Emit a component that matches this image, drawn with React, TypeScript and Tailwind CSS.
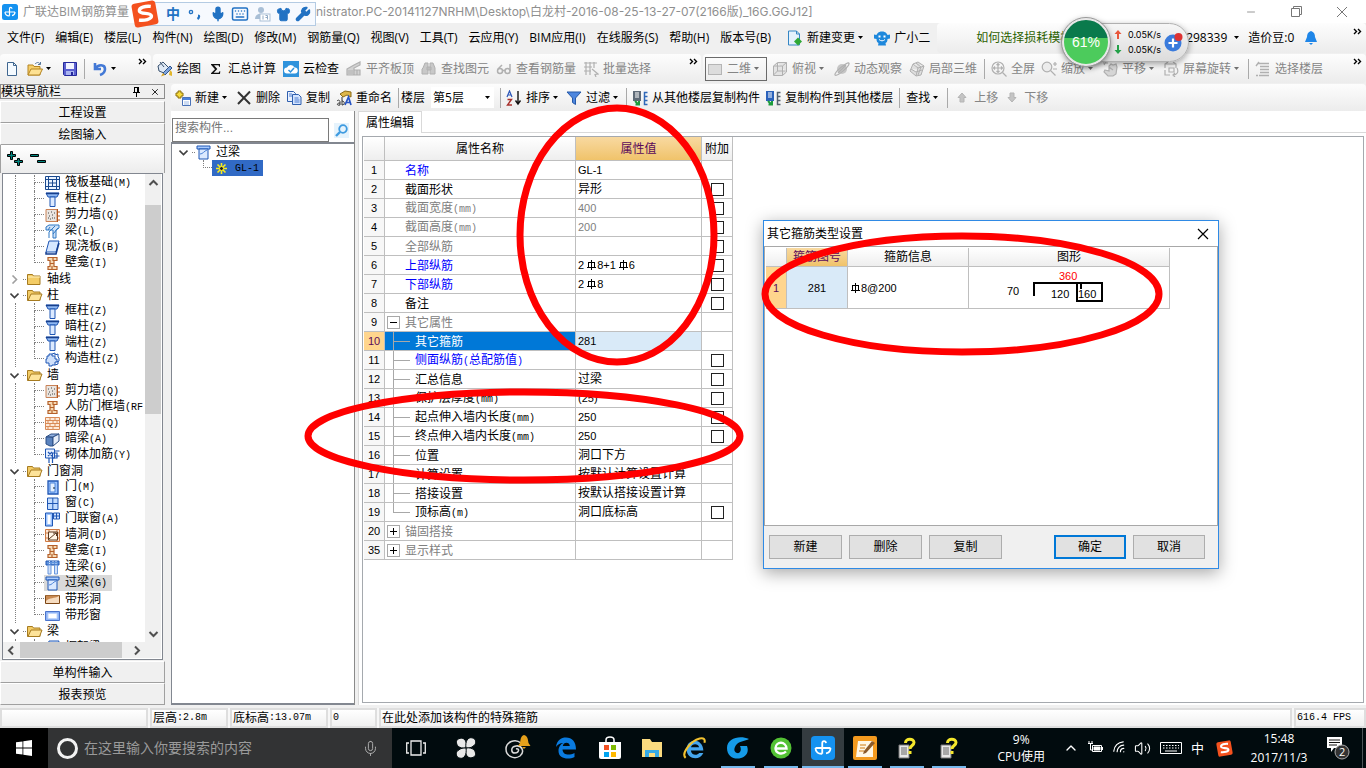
import React from 'react';
import { Mic, Keyboard, Shirt, Wrench, Wifi, Volume2, ChevronUp, Minus, X } from 'lucide-react';

const UI = "font-['Open_Sans','Noto_Sans_CJK_SC',sans-serif]";
const SONG = "font-['Liberation_Sans','Noto_Sans_CJK_SC',sans-serif]";

/* Latin runs are set at half the width of the Chinese characters. */
function T({ s, num }: { s: string; num?: boolean }) {
  return (
    <>
      {s.split(/([\x20-\x7e]+)/).map((p, i) =>
        i % 2 ? (
          <span key={i} className={num ? "font-['Liberation_Sans'] text-[11px]" : "font-['Liberation_Mono'] text-[10px]"}>{p}</span>
        ) : (
          p
        ),
      )}
    </>
  );
}

function Rebar() {
  return (
    <svg width="13" height="12" viewBox="0 0 13 12" className="inline-block align-[-2px]" fill="none" stroke="#000" shapeRendering="crispEdges">
      <path d="M4.500 3v5M7.500 1v10M10.500 3v5M4 3.500h7M3 8.500h9" />
    </svg>
  );
}

function Caret({ gray }: { gray?: boolean }) {
  return (
    <svg width="11" height="6" viewBox="0 0 11 6" className="shrink-0">
      <path d="M3 1h5L5.500 4z" fill={gray ? '#6f6f6f' : '#000'} />
    </svg>
  );
}

/* ---------- toolbar icons ---------- */
const g = { fill: 'none', stroke: '#b0b0b0', strokeWidth: 1.2 };
const ICONS: Record<string, React.ReactNode> = {
  new: <path d="M3.500 1.500h6l3 3v10h-9zM9.500 1.500v3h3" fill="#f4faff" stroke="#3f6690" />,
  open: (
    <>
      <path d="M1 4h5l1 1.500h6V14H1z" fill="#f6cf6a" stroke="#b58522" />
      <path d="M4 8h11.500l-3 6H1z" fill="#fde193" stroke="#b58522" />
      <path d="M8 3c2-2 4-2 5 0M13.500 1v2.500H11" fill="none" stroke="#55779c" />
    </>
  ),
  save: (
    <>
      <path d="M1.500 1.500h13v13h-12l-1-1z" fill="#5a5fd0" stroke="#23289b" />
      <path d="M4 2h8v6H4z" fill="#f1f3ff" />
      <path d="M4 10h8v4H4z" fill="#a9b4f0" />
      <path d="M9 11h2v3H9z" fill="#23289b" />
    </>
  ),
  undo: <path d="M3 2v6h6M3.500 7.500C6 3 13 3 13 8c0 3-2 5-5 6" fill="none" stroke="#4379d6" strokeWidth="2.600" />,
  bucket: (
    <>
      <path d="M1 5l5-4 6 6-5 5-5-2z" fill="#dfe9f5" stroke="#38506e" />
      <path d="M3 1l4 5" stroke="#38506e" />
      <path d="M6 12l7-7 2 2-7 7z" fill="#7fa5dd" stroke="#30558e" />
      <path d="M6 12l2 2-4 1.500z" fill="#d9a520" />
      <path d="M13 9l2 2v4l-3-1z" fill="#e2b62c" />
    </>
  ),
  sigma: <path d="M3 3h9v2.800h-.8L10.500 4.300H6L9.300 8 5.700 11.800h5l.8-1.500h.8L12 13H3v-.8L7 8.200 3 3.800z" fill="#111" />,
  cloud: (
    <>
      <rect width="16" height="16" fill="#2f93dc" />
      <path d="M4 12.500a3 3 0 010-6 4 4 0 017.500 0 3 3 0 01.5 6z" fill="#fff" />
      <path d="M5.500 9l2 2 3.500-4" fill="none" stroke="#2f93dc" strokeWidth="1.500" />
    </>
  ),
  slabTop: <path d="M1 8l7-4 6-3v3L8 7v7H1zM8 9h6v5H8zM2 10h5M2 12h5M11 9v5" {...g} fill="#d2d2d2" />,
  binoc: <path d="M2 7l2-5h3v11H1V8zM9 2h3l2 5v6H9zM6 6h4v3H6z" fill="#c8c8c8" stroke="#b0b0b0" />,
  glasses: (
    <g {...g} strokeWidth="1.500">
      <circle cx="4" cy="10" r="2.500" />
      <circle cx="11.500" cy="10" r="2.500" />
      <path d="M6.500 9.500h2.500M2 8l4-4M14 10V3" />
    </g>
  ),
  batch: <path d="M1 2h13M1 6h8M1 10h7M3 1v13M7 1v13M11 1v6M9 8l6 5-3 .5 1 2.500" {...g} />,
  rect: <rect x="1.500" y="3.500" width="13" height="10" fill="#dcdcdc" stroke="#b5b5b5" />,
  cube: <path d="M1.500 5l4-3.500h9V11l-4 3.500h-9zM1.500 5h9v9.500M10.500 5l4-3.500M5.500 2v8h8M5.500 10l-4 4" {...g} strokeWidth="1" fill="#e3e3e3" />,
  orbit: (
    <>
      <circle cx="8" cy="8" r="5" fill="#c6c6c6" />
      <path d="M1 14c2 2 15-9 14-12M1 14c-1-3 12-13 14-12M4 12l8-8" {...g} />
    </>
  ),
  local3d: <path d="M4 3l5-2 6 4-3 9-5 1-6-5zM4 3l5 4 6-2M9 7l-2 8M2 8l5 3 6-2M7 2l5 4-3 8" {...g} strokeWidth="1" fill="#dedede" />,
  full: (
    <g {...g}>
      <circle cx="7" cy="7" r="6" />
      <path d="M7 2.500v9M2.500 7h9M5.500 4L7 2.500 8.500 4M5.500 10L7 11.500 8.500 10M4 5.500L2.500 7 4 8.500M10 5.500L11.500 7 10 8.500M11.500 11.500l4 4" />
    </g>
  ),
  zoom: (
    <g {...g}>
      <circle cx="6" cy="6" r="4.800" fill="#ececec" />
      <path d="M9.500 9.500l5 5M12 3h4M14 1v4M12 8h4" />
    </g>
  ),
  hand: <path d="M3 9l4 1V5l2-2 2 1 3-1 1 3-1 7-3 2H6l-4-4zM7 6l4 3M1 2h5M2 4l2-3" {...g} fill="#d5d5d5" />,
  rotate: <path d="M2 7V3h11v4M2 3l3-2M13 3l-3-2M2 9v5h5M14 7c2 4 0 7-4 7M12 12l-2 2 2 2M6 7h5v4H6z" {...g} />,
  floors: <path d="M3 2.500h11M5 5.500h9M5 8.500h9M5 11.500h9M4 14.500h10M1 5l3-4M1 14.500h2" {...g} strokeWidth="1.400" />,
  add: (
    <>
      <path d="M3 1h3v2h2v3H6v2H3V6H1V3h2z" fill="#f7dc3c" stroke="#8b6f0a" />
      <path d="M7.500 7.500h8v8h-8z" fill="#fff" stroke="#4a72b8" />
      <path d="M8 8h7v2H8z" fill="#4a82dc" />
      <path d="M9 12h5M9 14h5" stroke="#9cb9e6" />
    </>
  ),
  del: <path d="M2 2l12 12M14 1.500L2 14" stroke="#333" strokeWidth="2" />,
  copy: (
    <>
      <path d="M1.500 1.500h6l2 2v8h-8z" fill="#e9f1ff" stroke="#2f5fae" />
      <path d="M6.500 4.500h6l2.500 2.500v7.500H6.500z" fill="#d4e4ff" stroke="#2f5fae" />
      <path d="M3 4h3M3 6h3M8.500 8h4M8.500 10h5M8.500 12h5" stroke="#4d7dcf" />
    </>
  ),
  rename: (
    <>
      <path d="M4 4l5-3 6 1v5l-4-2-4 2z" fill="#ddb64a" stroke="#8a6a17" />
      <path d="M9 15l3.500-8 2.500 8M10 12.500h4" fill="none" stroke="#2855c4" strokeWidth="1.700" />
      <path d="M1 11c2-2 3 0 3 1v3c-3 1-4-2 0-2M6 7v8c3 0 3-4 0-4" fill="none" stroke="#333" />
    </>
  ),
  sort: (
    <>
      <path d="M1 7l2.500-6L6 7M2 5h3" fill="none" stroke="#2c57b8" strokeWidth="1.200" />
      <path d="M1.500 9.500h4L1.500 15h4.500" fill="none" stroke="#a8302c" strokeWidth="1.400" />
      <path d="M12 1v12M9.500 10.500L12 14l2.500-3.500" fill="none" stroke="#111" strokeWidth="1.400" />
    </>
  ),
  filter: <path d="M1 2h14l-5.500 6v6.500l-3-2V8z" fill="#4d86de" stroke="#2458a8" />,
  copyIn: (
    <>
      <path d="M1 1h8v10H1z" fill="#5e6a77" />
      <path d="M3 3h4M3 5h4M3 7h4" stroke="#fff" />
      <path d="M15.500 2.500h-3v12h3M12.500 6.500h3M12.500 10.500h3" fill="none" stroke="#2f68b8" strokeWidth="1.500" />
      <path d="M3 11l3 3M7 11v3.500H3.500" stroke="#1c9c3c" strokeWidth="2" fill="none" />
    </>
  ),
  copyOut: (
    <>
      <path d="M1 1h8v10H1z" fill="#2b62bb" />
      <path d="M3 3h4M3 5h4M3 7h4" stroke="#fff" />
      <path d="M15.500 2.500h-3v12h3M12.500 6.500h3M12.500 10.500h3" fill="none" stroke="#54616f" strokeWidth="1.500" />
      <path d="M3 11l3 3M7 11v3.500H3.500" stroke="#1c9c3c" strokeWidth="2" fill="none" />
    </>
  ),
  up: <path d="M8 3l4 4.500h-2V12H6V7.500H4z" fill="#c4c4c4" stroke="#b5b5b5" />,
  down: <path d="M8 12l4-4.500h-2V3H6v4.500H4z" fill="#c4c4c4" stroke="#b5b5b5" />,
  change: (
    <>
      <path d="M1.500 1h8l3 3v11h-11zM9.500 1v3h3" fill="#e4f1fc" stroke="#3486c4" />
      <path d="M11 7.500l4 4-4 4-4-4z" fill="#2ea836" />
    </>
  ),
  robot: (
    <>
      <path d="M8 1.500c4 0 5 2.500 5.500 3.500L16 4.500v4l-2.500.5c0 3-1 3.500-2 4l.5 2.500H4L4.500 13c-1-.5-2-1-2-4L0 8.500v-4l2.500.5C3 4 4 1.500 8 1.500z" fill="#1e88dc" />
      <path d="M4.500 5.500h2v2h-2zM9.500 5.500h2v2h-2z" fill="#fff" />
      <path d="M5 9.500c2 1.800 4 1.800 6 0" stroke="#fff" fill="none" />
    </>
  ),
};

function Icon({ n, size = 16 }: { n: string; size?: number }) {
  return (
    <svg width={size} height={size} viewBox="0 0 16 16" className="shrink-0">
      {ICONS[n]}
    </svg>
  );
}

function Tool({ icon, label, caret, off }: { icon?: string; label?: string; caret?: boolean; off?: boolean }) {
  return (
    <button type="button" aria-label={label ?? icon} className={`flex shrink-0 items-center whitespace-nowrap ${off ? 'text-[#858585]' : 'text-black'}`}>
      {icon && <Icon n={icon} />}
      {label && <span className={icon ? 'ml-1' : ''}>{label}</span>}
      {caret && <Caret gray={off} />}
    </button>
  );
}

const Sep = () => <span className="h-5 w-px shrink-0 bg-[#a9a9a9]" />;

function More() {
  return (
    <svg width="9" height="7" viewBox="0 0 9 7" className="ml-auto shrink-0 self-start" fill="none" stroke="#000" strokeWidth="1.400">
      <path d="M1 1l2.500 2.500L1 6M5 1l2.500 2.500L5 6" />
    </svg>
  );
}

/* ---------- tree icons ---------- */
const b = '#1f56b4';
const o = '#b5602a';
const TREE: Record<string, React.ReactNode> = {
  raft: (
    <>
      <path d="M.5.500h14v13H.500z" fill="#eaf3ff" stroke="#19498f" />
      <path d="M3.500.500v13M11.500.500v13M.500 3.500h14M.500 10.500h14M7.500 3v8M4 7h8" fill="none" stroke="#19498f" />
    </>
  ),
  col: (
    <>
      <path d="M1 1h13l-2 4H3z" fill="#8fb8f2" stroke={b} />
      <path d="M5 5h5v9.500H5z" fill="#dceaff" stroke={b} />
      <path d="M1 1.500h13" stroke="#173f8c" strokeWidth="1.500" />
    </>
  ),
  shear: (
    <>
      <path d="M1 1.500h11v12H1z" fill="#e9e4df" stroke="#c98257" />
      <path d="M3 5h1M6 4h1M4 8h1M7 7h1M9 10h1M5 11h1M9 5h1M3 10h1M7 10h1" stroke="#444" />
      <path d="M12.500 1v13M13 4h2M13 8h2M13 12h2" stroke="#b5561c" />
    </>
  ),
  beam: (
    <>
      <path d="M1 3l3-2h10v3l-3 2v8H8V6H1z" fill="#cfe2f8" stroke="#2f78c4" />
      <path d="M4 14V8l6-6M5 3l-2 3M13 4l-5 6" stroke="#2f78c4" fill="none" />
    </>
  ),
  slab: (
    <>
      <path d="M4 1h10l-3 11H1z" fill="#d6e7ff" stroke={b} />
      <path d="M1 12v2h10l3-11" fill="none" stroke="#163f91" strokeWidth="1.500" />
    </>
  ),
  niche: <path d="M3 1.500h9v3H9v6h3v3H3v-3h2v-6H3zM8 2v3M5 7.500h4M7 10v3" fill="#f5d9b4" stroke={o} strokeWidth="1.200" />,
  gzz: (
    <>
      <path d="M4 2h3v2h3v3h2v3h-2v3H7v1H4v-3H1V7h1V4h2z" fill="#cfe0fa" stroke={b} />
      <path d="M7 2l3-1v2l3-1v3l1 1v3l-2 1M10 13l3-1V9" fill="none" stroke={b} />
    </>
  ),
  door: (
    <>
      <path d="M3 1h10v13H3z" fill="#9cc4ff" stroke={b} strokeWidth="1.300" />
      <path d="M5 3h5v9H5z" fill="#e3efff" stroke="#4d84d8" />
      <path d="M9 7v2" stroke="#123" />
    </>
  ),
  window: (
    <>
      <path d="M2.500 2h10.500v11.500H2.500z" fill="#c2dcff" stroke={b} />
      <path d="M7.800 2v11.500M2.500 7.500H13" fill="none" stroke={b} />
    </>
  ),
  doorwin: (
    <>
      <path d="M.5 1h7v13h-7z" fill="#9cc4ff" stroke={b} />
      <path d="M2.500 3h3v9h-3z" fill="#fff" />
      <path d="M8.500 1h6v6h-6zM11.500 1v6M8.500 4h6" fill="#cfe2ff" stroke={b} />
    </>
  ),
  brick: <path d="M.5 1.500h14v12H.500zM.500 4.500h14M.500 7.500h14M.500 10.500h14M5 2v3M10 2v3M3 5v3M8 5v3M12 5v3M5 8v3M10 8v3M3 11v3M8 11v3" fill="#fde9d8" stroke="#d98b58" />,
  abeam: (
    <>
      <path d="M1 5l5-3h8L8 5z" fill="#93b3e2" stroke="#2d4f85" />
      <path d="M1 5h3l4 .500V14H5l-4-2z" fill="#5a83bf" stroke="#2d4f85" />
      <path d="M8 5l6-3v7l-6 5z" fill="#e6eefa" stroke="#2d4f85" />
    </>
  ),
  jj: (
    <>
      <path d="M.5 1h9v9h-9z" fill="#e7f0ff" stroke={b} />
      <path d="M3 4l4 4M7 4L3 8M9.500 3h5M9.500 8h5M4 10v5M7.500 5v10M7 5h5v5H7" fill="none" stroke={b} strokeWidth="1.200" />
    </>
  ),
  hole: (
    <>
      <path d="M.5 1.500h14v12H.500zM.500 5h14M.500 10h14M4 2v12M12 2v12" fill="#fde8d6" stroke="#cf7a43" />
      <path d="M3.500 4h9v8h-9z" fill="#fff5e6" stroke="#5c3a20" />
      <path d="M4 11l7-6M8 5h3.500v3" fill="none" stroke="#5c3a20" />
    </>
  ),
  lian: (
    <>
      <path d="M1 1h13v4H1z" fill="#5f93dd" stroke={b} />
      <path d="M4.500 1v4M8 1v4M11 1v4" stroke="#dbe8fb" strokeDasharray="1 1" />
      <path d="M3 5h3v9H3zM9.500 5h3v9h-3z" fill="#cfe0fa" stroke="#6a97dc" />
    </>
  ),
  guo: (
    <>
      <path d="M1 1h13v3H1z" fill="#a8cbff" stroke={b} />
      <path d="M3 4h9v10H3z" fill="#dbe9ff" stroke={b} />
      <path d="M4 9c3 0 4-3 7-4" stroke="#4d84d8" fill="none" />
    </>
  ),
  stripHole: (
    <>
      <path d="M.5 3.500h14v8H.500z" fill="#f6dcc0" stroke="#7d4614" />
      <path d="M1 9C5 5 9 7 14 4v-.500H1z" fill="#c88a52" />
    </>
  ),
  stripWin: (
    <>
      <path d="M.5 3.500h14v9H.500z" fill="#8fb4f5" stroke="#4b74cc" />
      <path d="M3 5.500h9v5H3z" fill="#fff" stroke="#c2d6fb" />
    </>
  ),
};

function FolderIcon({ open }: { open: boolean }) {
  return (
    <svg width="17" height="14" viewBox="0 0 17 14" className="shrink-0" stroke="#a67b20">
      <path d="M1.500 2.500h5l1 1.500h6.500v8.500H1.500z" fill="#f3cc66" />
      {open ? <path d="M5 6h11l-2.500 6.500H2z" fill="#fde39a" /> : <path d="M2 5h12" stroke="#fff0be" />}
    </svg>
  );
}

function Chevron({ open }: { open: boolean }) {
  return (
    <svg width="9" height="9" viewBox="0 0 9 9" fill="none" stroke={open ? '#404040' : '#a0a0a0'} strokeWidth="1.600" className="shrink-0">
      {open ? <path d="M.5 2.500L4.500 6.500 8.500 2.500" /> : <path d="M2.500.5L6.500 4.500 2.500 8.500" />}
    </svg>
  );
}

type Group = { name?: string; open?: boolean; items: [string, string][] };
const GROUPS: Group[] = [
  { items: [['raft', '筏板基础(M)'], ['col', '框柱(Z)'], ['shear', '剪力墙(Q)'], ['beam', '梁(L)'], ['slab', '现浇板(B)'], ['niche', '壁龛(I)']] },
  { name: '轴线', open: false, items: [] },
  { name: '柱', open: true, items: [['col', '框柱(Z)'], ['col', '暗柱(Z)'], ['col', '端柱(Z)'], ['gzz', '构造柱(Z)']] },
  { name: '墙', open: true, items: [['shear', '剪力墙(Q)'], ['niche', '人防门框墙(RF'], ['brick', '砌体墙(Q)'], ['abeam', '暗梁(A)'], ['jj', '砌体加筋(Y)']] },
  {
    name: '门窗洞',
    open: true,
    items: [['door', '门(M)'], ['window', '窗(C)'], ['doorwin', '门联窗(A)'], ['hole', '墙洞(D)'], ['niche', '壁龛(I)'], ['lian', '连梁(G)'], ['guo', '过梁(G)'], ['stripHole', '带形洞'], ['stripWin', '带形窗']],
  },
  { name: '梁', open: true, items: [['slab', '框架梁']] },
];

function NavTree() {
  return (
    <ul className="min-w-0 flex-1 overflow-hidden pt-px">
      {GROUPS.map((gr, gi) => (
        <li key={gi}>
          {gr.name && (
            <div className="flex h-4 items-center pl-[7px]">
              <Chevron open={!!gr.open} />
              <span className="ml-1 w-[3px] border-t border-dotted border-[#808080]" />
              <FolderIcon open={!!gr.open} />
              <span className="ml-1">{gr.name}</span>
            </div>
          )}
          <ul className="ml-[12px] border-l border-dotted border-[#808080] pl-[18px]">
            {gr.items.map(([ic, label], i) => (
              <li key={i} className="flex h-4 items-center">
                <span className="flex h-4 shrink-0 flex-col">
                  <span className="h-2 w-[10px] border-b border-l border-dotted border-[#808080]" />
                  {i < gr.items.length - 1 && <span className="h-2 w-[10px] border-l border-dotted border-[#808080]" />}
                </span>
                <span className={`flex h-4 items-center pr-[5px] pl-px whitespace-nowrap ${label === '过梁(G)' ? 'bg-[#d9d9d9]' : ''}`}>
                  <svg width="15" height="15" viewBox="0 0 15 15" className="shrink-0">
                    {TREE[ic]}
                  </svg>
                  <span className="ml-[5px]">
                    <T s={label} />
                  </span>
                </span>
              </li>
            ))}
          </ul>
        </li>
      ))}
    </ul>
  );
}

const ScrollArrow = ({ d }: { d: string }) => (
  <svg width="17" height="17" viewBox="0 0 17 17" fill="none" stroke="#505050" strokeWidth="2" className="shrink-0">
    <path d={d} />
  </svg>
);

function NavButton({ children }: { children: string }) {
  return (
    <button type="button" className="flex h-[22px] w-full shrink-0 items-center justify-center border border-t-white border-r-[#a0a0a0] border-b-[#a0a0a0] border-l-white bg-[#f0f0f0] pt-[2px]">
      {children}
    </button>
  );
}

function Navigator() {
  return (
    <aside className="flex w-[165px] shrink-0 flex-col bg-[#f0f0f0]">
      <div className="flex h-[15px] shrink-0 items-center border border-[#8c8c8c] leading-none">
        <h2>模块导航栏</h2>
        <button type="button" aria-label="固定" className="ml-auto">
          <svg width="9" height="11" viewBox="0 0 9 11" fill="none" stroke="#000" shapeRendering="crispEdges">
            <path d="M2.500 6V1.500h4V6M5.500 1v5M1 6.500h7M4.500 7v4" />
          </svg>
        </button>
        <button type="button" aria-label="关闭" className="mx-1 ml-[9px]">
          <X size={10} strokeWidth={2} />
        </button>
      </div>
      <div className="h-[2px] shrink-0" />
      <NavButton>工程设置</NavButton>
      <NavButton>绘图输入</NavButton>
      <div className="flex h-7 shrink-0 items-center gap-[7px] border-x border-[#a0a0a0] bg-gradient-to-b from-white to-[#ececec] pl-[6px]">
        <button type="button" aria-label="全部展开">
          <svg width="16" height="16" viewBox="0 0 16 16" stroke="#000" fill="#00867f">
            <path d="M3.500.5h2v3h3v2h-3v3h-2v-3h-3v-2h3zM10.500 7.500h2v2h3v2h-3v3h-2v-3h-3v-2h3z" />
          </svg>
        </button>
        <button type="button" aria-label="全部折叠">
          <svg width="16" height="16" viewBox="0 0 16 16" stroke="#000" fill="#00867f">
            <path d="M.5 3.500h8v2h-8zM7.500 9.500h8v2h-8z" />
          </svg>
        </button>
      </div>
      <div className="mx-[2px] flex min-h-0 flex-1 flex-col overflow-hidden border border-[#828790] bg-white pr-px pb-px">
        <div className="flex min-h-0 flex-1">
          <NavTree />
          <div className="flex w-[16px] shrink-0 flex-col bg-[#f0f0f0]">
            <ScrollArrow d="M4.500 11l4-4 4 4" />
            <div className="mt-[14px] h-[209px] bg-[#cdcdcd]" />
            <div className="mt-auto">
              <ScrollArrow d="M4.500 7l4 4 4-4" />
            </div>
          </div>
        </div>
        <div className="flex h-[16px] shrink-0 items-center bg-[#f0f0f0] pr-4">
          <ScrollArrow d="M10 4.500l-4 4 4 4" />
          <div className="h-full w-[102px] bg-[#cdcdcd]" />
          <div className="ml-auto">
            <ScrollArrow d="M7 4.500l4 4-4 4" />
          </div>
        </div>
      </div>
      <div className="h-px shrink-0" />
      <NavButton>单构件输入</NavButton>
      <NavButton>报表预览</NavButton>
    </aside>
  );
}

function ComponentPanel() {
  return (
    <section className="flex w-[184px] shrink-0 flex-col border-r border-[#8a8a8a] bg-white">
      <div className="flex h-[31px] shrink-0 items-end">
        <input aria-label="搜索构件" placeholder="搜索构件..." className="ml-px h-6 w-[157px] border border-[#7a7a7a] bg-white px-[2px] pb-1 placeholder:text-[#757575]" />
        <button type="button" aria-label="搜索" className="mb-1 ml-[5px] flex h-[15px] w-[15px] items-center justify-center bg-[#e6f3fc]">
          <svg width="13" height="13" viewBox="0 0 13 13" fill="none" stroke="#3f9be0" strokeWidth="1.800">
            <circle cx="8" cy="5" r="3.800" />
            <path d="M5 8l-4 4" strokeWidth="2.400" />
          </svg>
        </button>
      </div>
      <ul className="flex-1 border-t-2 border-b-2 border-l border-[#828790] pl-[7px]">
        <li>
          <div className="flex h-4 items-center">
            <Chevron open />
            <span className="ml-1 w-[3px] border-t border-dotted border-[#808080]" />
            <svg width="15" height="15" viewBox="0 0 15 15" className="ml-px">
              {TREE.guo}
            </svg>
            <span className="ml-[5px]">过梁</span>
          </div>
          <div className="flex h-4 items-start pl-6">
            <span className="h-2 w-[9px] border-b border-l border-dotted border-[#808080]" />
            <span className="flex h-4 w-[51px] items-center bg-[#316ac5] pl-1">
              <svg width="11" height="11" viewBox="0 0 11 11" stroke="#f8ec20" strokeWidth="1.600">
                <path d="M5.500 0v11M0 5.500h11M1.500 1.500l8 8M9.500 1.500l-8 8" />
                <circle cx="5.500" cy="5.500" r="2" fill="#222" stroke="#f8ec20" strokeWidth="1" />
              </svg>
              <span className="ml-2">
                <T s="GL-1" />
              </span>
            </span>
          </div>
        </li>
      </ul>
    </section>
  );
}

/* ---------- property table ---------- */
type Row = { n: number; name: string; v?: string; c?: string; box?: boolean; kind?: 'sub' | 'last' | 'plus' | 'minus'; vc?: string };
const ROWS: Row[] = [
  { n: 1, name: '名称', v: 'GL-1', c: 'text-[#0000ff]' },
  { n: 2, name: '截面形状', v: '异形', box: true },
  { n: 3, name: '截面宽度(mm)', v: '400', c: 'text-[#808080]', vc: 'text-[#808080]', box: true },
  { n: 4, name: '截面高度(mm)', v: '200', c: 'text-[#808080]', vc: 'text-[#808080]', box: true },
  { n: 5, name: '全部纵筋', c: 'text-[#808080]', box: true },
  { n: 6, name: '上部纵筋', v: '2#8+1#6', c: 'text-[#0000ff]', box: true },
  { n: 7, name: '下部纵筋', v: '2#8', c: 'text-[#0000ff]', box: true },
  { n: 8, name: '备注', box: true },
  { n: 9, name: '其它属性', c: 'text-[#808080]', kind: 'minus' },
  { n: 10, name: '其它箍筋', v: '281', c: 'text-white', kind: 'sub' },
  { n: 11, name: '侧面纵筋(总配筋值)', c: 'text-[#0000ff]', kind: 'sub', box: true },
  { n: 12, name: '汇总信息', v: '过梁', kind: 'sub', box: true },
  { n: 13, name: '保护层厚度(mm)', v: '(25)', kind: 'sub', box: true },
  { n: 14, name: '起点伸入墙内长度(mm)', v: '250', kind: 'sub', box: true },
  { n: 15, name: '终点伸入墙内长度(mm)', v: '250', kind: 'sub', box: true },
  { n: 16, name: '位置', v: '洞口下方', kind: 'sub' },
  { n: 17, name: '计算设置', v: '按默认计算设置计算', kind: 'sub' },
  { n: 18, name: '搭接设置', v: '按默认搭接设置计算', kind: 'sub' },
  { n: 19, name: '顶标高(m)', v: '洞口底标高', kind: 'last', box: true },
  { n: 20, name: '锚固搭接', c: 'text-[#808080]', kind: 'plus' },
  { n: 35, name: '显示样式', c: 'text-[#808080]', kind: 'plus' },
];

function Value({ v }: { v: string }) {
  return (
    <>
      {v.split('#').map((p, i) => (
        <React.Fragment key={i}>
          {i > 0 && <Rebar />}
          <T s={p} num />
        </React.Fragment>
      ))}
    </>
  );
}

function NameCell({ r }: { r: Row }) {
  const line = 'border-[#a8a8a8]';
  return (
    <div className="flex h-[18px] items-center">
      {(r.kind === 'sub' || r.kind === 'last') && (
        <span className="ml-2 flex h-full shrink-0 flex-col">
          <span className={`h-[10px] w-[17px] border-b border-l ${line}`} />
          {r.kind === 'sub' && <span className={`w-[17px] flex-1 border-l ${line}`} />}
        </span>
      )}
      {(r.kind === 'plus' || r.kind === 'minus') && (
        <button type="button" aria-label={r.kind === 'plus' ? '展开' : '折叠'} className="ml-[2px] flex h-[13px] w-[13px] shrink-0 items-center justify-center border border-[#a8a8a8] bg-white">
          <svg width="9" height="9" viewBox="0 0 9 9" stroke="#000" shapeRendering="crispEdges">
            <path d={r.kind === 'plus' ? 'M1 4.500h7M4.500 1v7' : 'M1 4.500h7'} />
          </svg>
        </button>
      )}
      <span className={`pt-[2px] whitespace-nowrap ${r.kind ? 'ml-[5px]' : 'ml-5'} ${r.c ?? ''}`}>
        <T s={r.name} />
      </span>
    </div>
  );
}

const TH = 'border-r border-b border-[#bfbfbf] bg-gradient-to-b from-white to-[#eeeeee] p-0 font-normal';
const TH_ON = 'border-r border-b border-[#bfbfbf] bg-gradient-to-b from-[#f8d9a0] to-[#f0c36a] p-0 font-normal text-[#5a0a5a]';
const TD = 'border-r border-b border-[#bfbfbf] p-0';

function PropertyTable() {
  return (
    <table className="w-[369px] table-fixed border-separate border-spacing-0 leading-4">
      <colgroup>
        <col className="w-[21px]" />
        <col className="w-[191px]" />
        <col className="w-[126px]" />
        <col className="w-[31px]" />
      </colgroup>
      <thead>
        <tr className="h-6">
          <th className={TH} aria-label="序号" />
          <th className={TH}>属性名称</th>
          <th className={TH_ON}>属性值</th>
          <th className={TH}>附加</th>
        </tr>
      </thead>
      <tbody>
        {ROWS.map((r) => (
          <tr key={r.n} className="h-[19px]">
            <td className={`${TD} text-center ${r.n === 10 ? 'bg-[#ffd58d] text-[#5a0a5a]' : 'bg-[#f7f7f7]'}`}>
              <T s={String(r.n)} num />
            </td>
            <td className={`${TD} ${r.n === 10 ? 'bg-[#0078d7]' : ''}`}>
              <NameCell r={r} />
            </td>
            <td className={`${TD} pl-[2px] whitespace-nowrap ${r.vc ?? ''} ${r.n === 10 ? 'bg-[#d9eaf8]' : ''}`}>{r.v && <Value v={r.v} />}</td>
            <td className={TD}>
              {r.box && <input type="checkbox" aria-label={`附加 ${r.name}`} className="mx-auto block h-[13px] w-[13px] appearance-none border border-[#222] bg-white" />}
            </td>
          </tr>
        ))}
      </tbody>
    </table>
  );
}

function StirrupDialog() {
  const btn = 'h-6 w-[73px] border border-[#adadad] bg-[#e1e1e1]';
  return (
    <div role="dialog" aria-label="其它箍筋类型设置" className="absolute top-[220px] left-[763px] flex h-[349px] w-[456px] flex-col border border-[#2f8ae5] bg-[#f0f0f0] shadow-[0_4px_16px_rgba(0,0,0,0.35)]">
      <div className="flex h-[25px] shrink-0 items-center bg-white pr-2 pl-[3px]">
        <h2>其它箍筋类型设置</h2>
        <button type="button" aria-label="关闭" className="ml-auto">
          <svg width="14" height="14" viewBox="0 0 14 14" stroke="#000" strokeWidth="1.200">
            <path d="M2 2l10 10M12 2L2 12" />
          </svg>
        </button>
      </div>
      <div className="min-h-0 flex-1 border border-[#a8a8a8] bg-white pt-px pl-px">
        <table className="w-[404px] table-fixed border-separate border-spacing-0 leading-4">
          <colgroup>
            <col className="w-[21px]" />
            <col className="w-[61px]" />
            <col className="w-[121px]" />
            <col className="w-[201px]" />
          </colgroup>
          <thead>
            <tr className="h-[19px]">
              <th className={TH} aria-label="序号" />
              <th className={TH_ON}>箍筋图号</th>
              <th className={TH}>箍筋信息</th>
              <th className={TH}>图形</th>
            </tr>
          </thead>
          <tbody>
            <tr className="h-[42px]">
              <td className={`${TD} bg-[#ffd58d] text-center text-[#5a0a5a]`}>
                <T s="1" num />
              </td>
              <td className={`${TD} bg-[#d9eaf8] text-center`}>
                <T s="281" num />
              </td>
              <td className={TD}>
                <Value v="#8@200" />
              </td>
              <td className={TD}>
                <svg width="200" height="41" viewBox="0 0 200 41" className="block font-['Liberation_Sans']" fontSize="11">
                  <path d="M65 29V16h68v18h-25V16M112 16v6" fill="none" stroke="#000" strokeWidth="2" shapeRendering="crispEdges" />
                  <text x="90" y="13" fill="#ff0000">360</text>
                  <text x="38" y="28">70</text>
                  <text x="82" y="31">120</text>
                  <text x="109" y="31">160</text>
                </svg>
              </td>
            </tr>
          </tbody>
        </table>
      </div>
      <div className="flex h-[42px] shrink-0 items-center gap-[7px] px-[5px]">
        <button type="button" className={btn}>新建</button>
        <button type="button" className={btn}>删除</button>
        <button type="button" className={btn}>复制</button>
        <button type="button" className="ml-auto h-6 w-[72px] border-2 border-[#0078d7] bg-[#e1e1e1]">确定</button>
        <button type="button" className="mr-2 h-6 w-[72px] border border-[#adadad] bg-[#e1e1e1]">取消</button>
      </div>
    </div>
  );
}

/* ---------- chrome ---------- */
function AppLogo({ size }: { size: number }) {
  return (
    <svg width={size} height={size} viewBox="0 0 16 16" className="shrink-0">
      <rect width="16" height="16" rx="2.500" fill="#1592f0" />
      <path d="M10 4.800C9.800 3 7.500 3 7.500 4.800v7M3 8h10M3 8c0 3 2 4 4.500 3.800M13 8c0 2-1 3.200-3 3.600" fill="none" stroke="#fff" strokeWidth="1.200" />
    </svg>
  );
}

function SogouMark({ size }: { size: number }) {
  return (
    <svg width={size} height={size} viewBox="0 0 28 28" className="relative z-10 shrink-0">
      <g transform="rotate(-10 14 14)">
        <rect x="2" y="2" width="24" height="24" rx="3" fill="#f4511e" />
        <path d="M21 7.500c-5-1.500-12-1-12 2.500 0 4 11 3 11 7 0 3.500-8 3.500-13 2" fill="none" stroke="#fff" strokeWidth="3.400" />
      </g>
    </svg>
  );
}

function ImeBar() {
  return (
    <div className="absolute top-0 left-[131px] flex items-center">
      <SogouMark size={28} />
      <div className="-ml-3 flex h-6 items-center border border-[#b4cbe3] bg-[#f6f9fe] pr-1 pl-[18px] text-[#2272c3]">
        <span className="text-[14px] leading-none font-bold">中</span>
        <svg width="14" height="14" viewBox="0 0 14 14" className="ml-2" fill="none" stroke="#2272c3" strokeWidth="1.400">
          <circle cx="3" cy="5" r="1.600" />
          <path d="M10 8.500c1.500 0 1.500 2-.5 3.500" strokeWidth="2.200" />
        </svg>
        <Mic size={16} strokeWidth={2.200} className="ml-2" fill="#2272c3" />
        <Keyboard size={18} strokeWidth={2} className="ml-[5px]" />
        <svg width="17" height="16" viewBox="0 0 17 16" className="ml-[5px]">
          <circle cx="7" cy="4" r="3" fill="#a9bfd6" />
          <path d="M1 13c0-7 11-7 12 0z" fill="#a9bfd6" />
          <rect x="6" y="8" width="10" height="7" fill="#fff" stroke="#a9bfd6" />
          <path d="M9 9.500v4M11.500 9.500h2v4M11.500 11.500h2" fill="none" stroke="#8fa9c4" />
        </svg>
        <Shirt size={15} strokeWidth={1.500} className="ml-[5px]" fill="#2272c3" />
        <Wrench size={16} strokeWidth={2} className="ml-1" fill="#2272c3" />
      </div>
    </div>
  );
}

function SpeedBall() {
  return (
    <div className="absolute top-[18px] left-[1062px] flex items-center">
      <div className="relative z-10 flex h-12 w-12 items-center justify-center rounded-full border-2 border-[#e8e8e8] bg-gradient-to-b from-[#0a7a4c] from-40% to-[#4ccb5c] to-40% font-['Liberation_Sans'] text-[14px] text-white shadow-[0_2px_6px_rgba(0,0,0,0.5)] outline outline-[#9a9a9a]">61%</div>
      <div className="-ml-6 flex h-[39px] items-center rounded-r-[20px] border border-[#b0b0b0] bg-gradient-to-b from-[#f6f6f6] to-[#dcdcdc] pr-[5px] pl-[27px] shadow-[0_2px_6px_rgba(0,0,0,0.35)]">
        <div className="flex flex-col font-['Inter'] text-[9px] leading-[15px]">
          <span className="flex items-center gap-[6px]">
            <svg width="8" height="9" viewBox="0 0 8 9"><path d="M4 0l3.500 4H5v5H3V4H.5z" fill="#e8573c" /></svg>
            0.05K/s
          </span>
          <span className="flex items-center gap-[6px]">
            <svg width="8" height="9" viewBox="0 0 8 9"><path d="M4 9l3.500-4H5V0H3v5H.5z" fill="#24a148" /></svg>
            0.05K/s
          </span>
        </div>
        <svg width="19" height="19" viewBox="0 0 19 19" className="ml-[3px]">
          <circle cx="9" cy="10" r="8.500" fill="#3a7bdc" />
          <path d="M9 5.500v9M4.500 10h9" stroke="#fff" strokeWidth="2.200" />
          <circle cx="14.500" cy="4" r="4" fill="#dd3333" />
        </svg>
      </div>
    </div>
  );
}

const MENUS = ['文件(F)', '编辑(E)', '楼层(L)', '构件(N)', '绘图(D)', '修改(M)', '钢筋量(Q)', '视图(V)', '工具(T)', '云应用(Y)', 'BIM应用(I)', '在线服务(S)', '帮助(H)', '版本号(B)'];

const STRIP = 'flex items-center rounded-sm bg-gradient-to-b from-[#fdfdfd] to-[#ececec]';

function Header() {
  return (
    <header className={`${UI} shrink-0 text-[12px] leading-4`}>
      <div className="flex h-[23px] items-center bg-white pl-[2px] text-[#8f8f8f]">
        <AppLogo size={16} />
        <h1 className="ml-[5px] flex flex-1 whitespace-nowrap">
          <span className="w-[293px]">广联达BIM钢筋算量</span>
          <span className="font-['Inter','Noto_Sans_CJK_SC',sans-serif]">nistrator.PC-20141127NRHM\Desktop\白龙村-2016-08-25-13-27-07(2166版)_16G.GGJ12]</span>
        </h1>
        <div className="flex items-center gap-[34px] pr-[18px] text-[#777]">
          <button type="button" aria-label="最小化"><Minus size={12} strokeWidth={1.500} /></button>
          <button type="button" aria-label="还原">
            <svg width="11" height="11" viewBox="0 0 11 11" fill="none" stroke="#777">
              <path d="M.5 2.500h8v8h-8zM2.500 2V.500h8v8H9" />
            </svg>
          </button>
          <button type="button" aria-label="关闭">
            <svg width="12" height="12" viewBox="0 0 12 12" stroke="#777">
              <path d="M1 1l10 10M11 1L1 11" />
            </svg>
          </button>
        </div>
      </div>
      <nav className="flex h-[30px] items-center bg-[#f0f0f0] pl-[7px] whitespace-nowrap">
        <div className="flex shrink-0 gap-[11px]">
          {MENUS.map((m) => (
            <button key={m} type="button">{m}</button>
          ))}
        </div>
        <div className="ml-4 flex shrink-0 items-center gap-2">
          <Tool icon="change" label="新建变更" caret />
          <Tool icon="robot" label="广小二" />
        </div>
        <div className="ml-[7px] flex h-full min-w-0 flex-1 items-center rounded-sm bg-gradient-to-b from-[#fdfdfd] to-[#ececec] pr-1">
          <a href="#help" className="ml-[39px] w-[210px] shrink-0 text-[#2d6200]">如何选择损耗模板</a>
          <button type="button" className="flex items-center gap-1">298339 <Caret /></button>
          <span className="ml-[6px]">造价豆:0</span>
          <svg width="12" height="15" viewBox="0 0 12 15" className="ml-[11px]">
            <path d="M6 0c3 1 4 3 4 6l2 5H0l2-5c0-3 1-5 4-6z" fill="#1f86e8" />
            <path d="M4 12h4l-2 2z" fill="#1f86e8" />
          </svg>
          <div className="ml-auto flex self-start pt-[5px]"><More /></div>
        </div>
      </nav>
      <div className="flex h-[31px] gap-[2px] bg-[#f0f0f0] py-px">
        <div className={`${STRIP} w-[151px] shrink-0 pr-1 pl-1`}>
          <Tool icon="new" />
          <span className="ml-[7px]"><Tool icon="open" caret /></span>
          <span className="mr-[6px] ml-2 flex"><Tool icon="save" /></span>
          <Sep />
          <span className="ml-[7px]"><Tool icon="undo" caret /></span>
          <div className="ml-auto self-start pt-1"><More /></div>
        </div>
        <div className={`${STRIP} w-[548px] shrink-0 gap-[7px] pr-[3px] pl-1`}>
          <Tool icon="bucket" label="绘图" />
          <Tool icon="sigma" label="汇总计算" />
          <Tool icon="cloud" label="云检查" />
          <Tool icon="slabTop" label="平齐板顶" off />
          <Tool icon="binoc" label="查找图元" off />
          <Tool icon="glasses" label="查看钢筋量" off />
          <Tool icon="batch" label="批量选择" off />
          <div className="ml-auto self-start pt-1"><More /></div>
        </div>
        <div className={`${STRIP} flex-1 gap-[7px] pr-1 pl-[2px]`}>
          <div className="-mr-[2px] flex h-6 w-[62px] shrink-0 items-center border border-[#6a6a6a] pl-px">
            <Tool icon="rect" label="二维" caret off />
          </div>
          <Tool icon="cube" label="俯视" caret off />
          <Tool icon="orbit" label="动态观察" off />
          <Tool icon="local3d" label="局部三维" off />
          <div className="flex items-center gap-[6px]">
            <Sep />
            <Tool icon="full" label="全屏" off />
            <Tool icon="zoom" label="缩放" caret off />
            <Tool icon="hand" label="平移" caret off />
            <Tool icon="rotate" label="屏幕旋转" caret off />
            <Sep />
            <Tool icon="floors" label="选择楼层" off />
          </div>
          <div className="ml-auto self-start pt-1"><More /></div>
        </div>
      </div>
    </header>
  );
}

function ComponentToolbar() {
  return (
    <div className={`${UI} ${STRIP} h-[27px] shrink-0 gap-[6px] pl-1`}>
      <Tool icon="add" label="新建" caret />
      <Tool icon="del" label="删除" />
      <Tool icon="copy" label="复制" />
      <Tool icon="rename" label="重命名" />
      <Sep />
      <label className="-ml-1 flex shrink-0 items-center gap-[6px]">
        楼层
        <span className="flex items-center bg-white pr-px">
          <select className="h-[21px] w-[51px] appearance-none bg-white px-[2px] text-[12px]">
            <option>第5层</option>
          </select>
          <Caret />
        </span>
      </label>
      <div className="flex items-center gap-[5px]">
        <Sep />
        <Tool icon="sort" label="排序" caret />
        <Tool icon="filter" label="过滤" caret />
        <Sep />
        <Tool icon="copyIn" label="从其他楼层复制构件" />
        <Tool icon="copyOut" label="复制构件到其他楼层" />
      </div>
      <Sep />
      <Tool label="查找" caret />
      <Sep />
      <Tool icon="up" label="上移" off />
      <Tool icon="down" label="下移" off />
    </div>
  );
}

function StatusBar() {
  const cell = 'flex items-center border-2 border-[#dedede] bg-gradient-to-b from-white to-[#f0f0f0] pl-px';
  return (
    <footer className="flex h-[20px] shrink-0 gap-[2px] bg-[#f7f7f7] leading-4 whitespace-nowrap">
      <div className={`${cell} w-[148px]`} />
      <div className={`${cell} w-[78px]`}><T s="层高:2.8m" /></div>
      <div className={`${cell} w-[98px]`}><T s="底标高:13.07m" /></div>
      <div className={`${cell} w-[47px]`}><T s="0" /></div>
      <div className={`${cell} flex-1`}>在此处添加该构件的特殊箍筋</div>
      <div className={`${cell} w-[72px]`}><T s="616.4 FPS" /></div>
    </footer>
  );
}

function TaskItem({ w = 'w-[43px]', run, active, label, children }: { w?: string; run?: boolean; active?: boolean; label: string; children: React.ReactNode }) {
  return (
    <button type="button" aria-label={label} className={`flex h-10 shrink-0 flex-col items-center ${w} ${active ? 'bg-[#343c40]' : ''}`}>
      <span className="flex flex-1 items-center">{children}</span>
      {run && <span className={`-mt-[2px] h-[2px] bg-[#76b9ed] ${active ? 'w-full' : 'w-[34px]'}`} />}
    </button>
  );
}

const HelpDoc = () => (
  <svg width="20" height="22" viewBox="0 0 20 22">
    <path d="M2 8h10v13H2z" fill="#e8e8e8" stroke="#777" />
    <path d="M4 11h6M4 13h6M4 15h6M4 17h6" stroke="#666" />
    <path d="M8.500 6c0-5 8.500-5 8.500-.5 0 3-4 3-4 6.500M13 14v3" fill="none" stroke="#f5e72b" strokeWidth="3" />
  </svg>
);

function Taskbar() {
  return (
    <div className={`${UI} flex h-10 shrink-0 items-center bg-[#010b0e] text-[12px] leading-4 text-white`}>
      <button type="button" aria-label="开始" className="flex h-10 w-12 shrink-0 items-center justify-center bg-black">
        <svg width="16" height="16" viewBox="0 0 16 16" fill="#fff">
          <path d="M0 2.300l6.500-.9v6.200H0zM7.300 1.200L16 0v7.600H7.300zM0 8.400h6.500v6.200L0 13.700zM7.300 8.400H16V16l-8.700-1.200z" />
        </svg>
      </button>
      <label className="flex h-10 w-[344px] shrink-0 items-center bg-[#323334] px-[9px]">
        <span className="h-[21px] w-[21px] shrink-0 rounded-full border-[3px] border-[#f2f2f2]" />
        <input aria-label="搜索" placeholder="在这里输入你要搜索的内容" className="ml-[6px] min-w-0 flex-1 bg-transparent text-[14px] placeholder:text-[#9a9a9a]" />
        <Mic size={17} strokeWidth={1.300} className="mr-1 text-[#b5b5b5]" />
      </label>
      <TaskItem w="w-[48px]" label="任务视图">
        <svg width="20" height="16" viewBox="0 0 20 16" fill="none" stroke="#eee" strokeWidth="1.300">
          <path d="M5 1h10v14H5zM3 3H.7v10H3M17 3h2.300v10H17" />
        </svg>
      </TaskItem>
      <TaskItem w="w-[52px]" label="风扇">
        <svg width="22" height="22" viewBox="0 0 22 22" fill="#e9e9e9" stroke="#010b0e">
          <path d="M11 11C4 12 1 8 1.500 4.500S8 0 10 3s1.500 5 1 8z" />
          <path d="M11 11C10 4 13 0 17 .8s5 5 2 7.700-5 2.500-8 2.500z" />
          <path d="M11 11c7-1 10 3 9.500 6.500S14 22 12 19s-1.500-5-1-8z" />
          <path d="M11 11c1 7-2 11-6 10.200S0 16 3 13.500 8 11 11 11z" />
        </svg>
      </TaskItem>
      <TaskItem w="w-[50px]" label="提醒">
        <svg width="28" height="28" viewBox="0 0 28 28" fill="none">
          <path d="M18 9C12 4 3 8 3 15s8 11 14 7c5-4 2-11-4-10s-5 7-1 7 5-5 1-4" stroke="#d9d9d9" strokeWidth="1.500" />
          <path d="M21 1c4 1 4 5 4.500 8l2 3H15l2-3c.5-3 .5-7 4-8zM19 13h4l-2 2z" fill="#e5a01b" />
        </svg>
      </TaskItem>
      <TaskItem w="w-[48px]" label="Edge">
        <svg width="22" height="22" viewBox="0 0 22 22">
          <path d="M1 10C2 3 6 .5 11 .5c6 0 10 4 10 12H7.500c.5 6 7 6 12 3.500v4c-6 3-16 2-16-6 0-4 2-7 5-8-4 0-6 2-7.500 4zM7.800 9h7c0-4.500-6.500-4.500-7 0z" fill="#0a7be0" />
        </svg>
      </TaskItem>
      <TaskItem w="w-[40px]" label="应用商店">
        <svg width="24" height="24" viewBox="0 0 24 24">
          <path d="M8 7V4c0-4 8-4 8 0v3" fill="none" stroke="#fff" strokeWidth="1.500" />
          <path d="M1 6h22v15a2 2 0 01-2 2H3a2 2 0 01-2-2z" fill="#fff" />
          <path d="M6 9h5v5H6z" fill="#f25022" /><path d="M13 9h5v5h-5z" fill="#7fba00" />
          <path d="M6 16h5v5H6z" fill="#00a4ef" /><path d="M13 16h5v5h-5z" fill="#ffb900" />
        </svg>
      </TaskItem>
      <TaskItem label="资源管理器">
        <svg width="22" height="20" viewBox="0 0 22 20">
          <path d="M1 1h8l2 3h10v15H1z" fill="#fbdb7f" /><path d="M4 12h14v7h-4v-4H8v4H4z" fill="#36a9e6" />
        </svg>
      </TaskItem>
      <TaskItem label="Internet Explorer">
        <svg width="25" height="25" viewBox="0 0 24 24">
          <path d="M20.500 14H8.500c.3 4.500 6 5.200 8 2.300h4c-3.500 8.500-17 6-16-4.300C5 2 20 1.500 20.500 14zM8.600 10.800h7.800c-.5-4-7-4-7.800 0z" fill="#45a6ee" />
          <path d="M3.500 21C-1 17 8 5 17 2.500c4-1 5.500.8 4.500 4" fill="none" stroke="#f2c230" strokeWidth="2" />
        </svg>
      </TaskItem>
      <TaskItem run label="浏览器">
        <svg width="24" height="24" viewBox="0 0 24 24">
          <path d="M23 3C14-1 1 2 1 12c0 9 8 12 14 10 6-1.500 8-7 6-12h-7c2 4 0 8-3 7-4-1-3-6 0-9s8-3 12-5z" fill="#159be8" />
        </svg>
      </TaskItem>
      <TaskItem run label="安全浏览器">
        <svg width="22" height="22" viewBox="0 0 22 22">
          <circle cx="11" cy="11" r="10.500" fill="#53c234" />
          <path d="M5 11.500h11.500C16 4 6 4 5.500 11c0 6 7 7 10.500 3.500" fill="none" stroke="#fff" strokeWidth="2.400" />
        </svg>
      </TaskItem>
      <TaskItem w="w-[42px]" run active label="钢筋算量"><AppLogo size={24} /></TaskItem>
      <TaskItem w="w-[42px]" run label="画图">
        <svg width="24" height="24" viewBox="0 0 24 24">
          <rect width="24" height="24" rx="2" fill="#f39a1f" /><path d="M5 5h15v16H3z" fill="#fff7e6" />
          <path d="M7 9h6M7 12h5M6 15h5" stroke="#d07a10" /><path d="M19 5l3 2-9 10-3 1 1-3z" fill="#8b5a2b" />
        </svg>
      </TaskItem>
      <TaskItem w="w-[42px]" run label="帮助文档"><HelpDoc /></TaskItem>
      <TaskItem w="w-[42px]" run label="帮助文档"><HelpDoc /></TaskItem>
      <div className="ml-auto flex h-full shrink-0 items-center">
        <div className="text-center leading-[17px]">
          <div>9%</div>
          <div>CPU使用</div>
        </div>
        <ChevronUp size={16} className="ml-[18px]" />
        <svg width="16" height="14" viewBox="0 0 16 14" className="ml-2" fill="none" stroke="#fff">
          <path d="M5.500 4.500h9v6h-9zM15.500 6v3M1 2.500h5M2 0v2M5 0v2M3.500 3v6h2" /><path d="M7 6h6v3H7z" fill="#fff" />
        </svg>
        <Wifi size={16} strokeWidth={1.800} className="ml-[9px] -rotate-45" />
        <Volume2 size={17} strokeWidth={1.500} className="ml-[6px]" />
        <svg width="22" height="14" viewBox="0 0 22 14" className="ml-[9px]" fill="none" stroke="#fff">
          <path d="M.5 1.500h21v11H.5z" /><path d="M3 4.500h16M3 7h16" strokeDasharray="1.500 1.500" /><path d="M5 10h12" />
        </svg>
        <span className="ml-[9px] text-[13px]">中</span>
        <span className="ml-[12px]"><SogouMark size={17} /></span>
        <div className="ml-4 w-[60px] text-center leading-[19px]">
          <div>15:48</div>
          <div>2017/11/3</div>
        </div>
        <svg width="24" height="24" viewBox="0 0 24 24" className="ml-[17px]">
          <path d="M1 1h15v11H8l-3 4v-4H1z" fill="#fff" /><path d="M3 4h11M3 6.500h11M3 9h8" stroke="#111" />
          <circle cx="16" cy="16" r="7" fill="#333" stroke="#aaa" /><text x="13" y="20" fontSize="11" fill="#fff">2</text>
        </svg>
        <span className="ml-[12px] h-full w-px bg-[#4c5457]" />
        <span className="w-[3px]" />
      </div>
    </div>
  );
}

export default function App() {
  return (
    <div className={`${SONG} relative flex h-screen min-h-[640px] flex-col overflow-hidden bg-[#f0f0f0] text-[12px] leading-4 text-black`}>
      <Header />
      <div className="flex min-h-0 flex-1 pb-[3px]">
        <Navigator />
        <div className="ml-[6px] flex min-w-0 flex-1 flex-col">
          <ComponentToolbar />
          <div className="flex min-h-0 flex-1">
            <ComponentPanel />
            <main className="ml-[3px] flex min-w-0 flex-1 flex-col border-l border-[#d9d9d9] bg-white">
              <div className="flex shrink-0">
                <h2 className={`${UI} flex h-[22px] w-[63px] items-center justify-center border-t border-r border-[#d9d9d9]`}>属性编辑</h2>
                <span className="flex-1 border-b border-[#d9d9d9]" />
              </div>
              <div className="mt-[3px] mr-[2px] mb-[2px] ml-[3px] min-h-0 flex-1 border border-[#a5a9ae] pl-px">
                <PropertyTable />
              </div>
            </main>
          </div>
        </div>
      </div>
      <StatusBar />
      <Taskbar />
      <StirrupDialog />
      <svg className="pointer-events-none absolute top-0 left-0" width="1366" height="768" viewBox="0 0 1366 768" fill="none" stroke="#ff0000" strokeWidth="7">
        <ellipse cx="617" cy="235" rx="97" ry="127" />
        <ellipse cx="524" cy="436" rx="216" ry="44" />
        <ellipse cx="962" cy="294" rx="197" ry="58" />
      </svg>
      <div className={UI}>
        <ImeBar />
        <SpeedBall />
      </div>
    </div>
  );
}
